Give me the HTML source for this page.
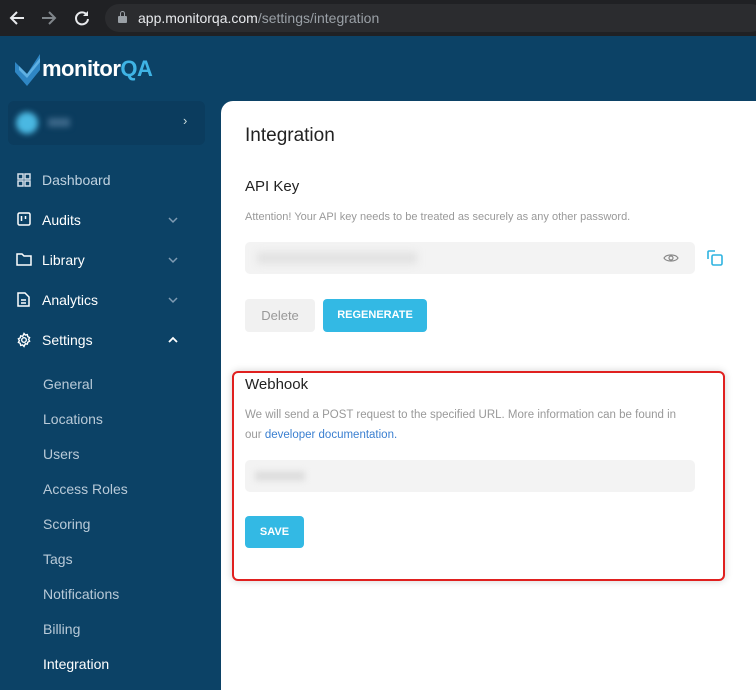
<!DOCTYPE html>
<html><head><style>
*{margin:0;padding:0;box-sizing:border-box}
body{width:756px;height:690px;overflow:hidden;background:#0c4266;font-family:"Liberation Sans",sans-serif;position:relative}
.bar{position:absolute;left:0;top:0;width:756px;height:36px;background:#202124}
.url{position:absolute;left:105px;top:4px;width:660px;height:28px;border-radius:14px;background:#2b2c2f;color:#9aa0a6;font-size:14px;line-height:28px;padding-left:33px}
.url b{color:#e8eaed;font-weight:normal}
.abs{position:absolute}
.nav{position:absolute;left:42px;color:#fff;font-size:14px}
.sub{position:absolute;left:43px;color:#b9cad8;font-size:14px}
.main{position:absolute;left:221px;top:101px;width:535px;height:589px;background:#fff;border-top-left-radius:12px}
.t{position:absolute;color:#222}
</style></head><body>
<div class="bar">
<svg class="abs" style="left:8px;top:9px" width="18" height="18" viewBox="0 0 18 18"><path d="M16 9H3M9 3L3 9l6 6" stroke="#e8eaed" stroke-width="2" fill="none"/></svg>
<svg class="abs" style="left:40px;top:9px" width="18" height="18" viewBox="0 0 18 18"><path d="M2 9h13M9 3l6 6-6 6" stroke="#80868b" stroke-width="2" fill="none"/></svg>
<svg class="abs" style="left:73px;top:9px" width="18" height="18" viewBox="0 0 18 18"><path d="M14 6A6 6 0 1 0 15 10" stroke="#e8eaed" stroke-width="2" fill="none"/><path d="M15 2v5h-5z" fill="#e8eaed"/></svg>
<div class="url"><span class="abs" style="left:13px;top:12px;width:9px;height:7px;background:#9aa0a6;border-radius:1px"></span><span class="abs" style="left:15px;top:7px;width:5px;height:6px;border:1.5px solid #9aa0a6;border-bottom:none;border-radius:3px 3px 0 0"></span><b>app.monitorqa.com</b>/settings/integration</div>
</div>
<svg class="abs" style="left:15px;top:52px" width="26" height="34" viewBox="0 0 26 34"><path d="M0 10l12 12L25 2v16L12 34 0 20z" fill="#2f86c4"/><path d="M4 14l8 8L25 6v4L12 26 4 18z" fill="#5fb0e3"/></svg>
<div class="abs" style="left:42px;top:56px;font-size:22px;font-weight:bold;color:#fff;letter-spacing:-0.5px">monitor<span style="color:#3fb4e5">QA</span></div>
<div class="abs" style="left:8px;top:101px;width:197px;height:44px;background:#0b3c5e;border-radius:6px"></div>
<div class="abs" style="left:16px;top:112px;width:22px;height:22px;border-radius:50%;background:#4ab8e2;filter:blur(3px)"></div>
<div class="abs" style="left:48px;top:118px;width:22px;height:9px;background:#3a6688;filter:blur(3px)"></div>
<div class="abs" style="left:183px;top:113px;color:#cdd;font-size:13px">›</div>
<svg class="abs" style="left:17px;top:173px" width="14" height="14" viewBox="0 0 14 14" fill="none" stroke="#d5e0ea" stroke-width="1.5"><rect x="1" y="1" width="5" height="5"/><rect x="8" y="1" width="5" height="5"/><rect x="1" y="8" width="5" height="5"/><rect x="8" y="8" width="5" height="5"/></svg>
<div class="nav" style="top:172px;color:#c0d2e0">Dashboard</div>
<svg class="abs" style="left:17px;top:212px" width="14" height="14" viewBox="0 0 14 14" fill="none" stroke="#fff" stroke-width="1.5"><rect x="1" y="1" width="12" height="12" rx="1.5"/><path d="M4.5 4v5M8.5 4v3"/></svg>
<div class="nav" style="top:212px">Audits</div>
<svg class="abs" style="left:16px;top:252px" width="16" height="14" viewBox="0 0 16 14" fill="none" stroke="#fff" stroke-width="1.5"><path d="M1 2h5l2 2h7v9H1z"/></svg>
<div class="nav" style="top:252px">Library</div>
<svg class="abs" style="left:17px;top:292px" width="13" height="15" viewBox="0 0 13 15" fill="none" stroke="#fff" stroke-width="1.5"><path d="M1 1h7l4 4v9H1z M4 8h5M4 11h5"/></svg>
<div class="nav" style="top:292px">Analytics</div>
<svg class="abs" style="left:16px;top:332px" width="16" height="16" viewBox="0 0 16 16" fill="none" stroke="#fff" stroke-width="1.4"><circle cx="8" cy="8" r="2.3"/><path d="M8 1.5l1.3 1.6 2-.5.5 2 1.8 1-1 1.8 1 1.8-1.8 1-.5 2-2-.5L8 14.5l-1.3-1.6-2 .5-.5-2-1.8-1 1-1.8-1-1.8 1.8-1 .5-2 2 .5z"/></svg>
<div class="nav" style="top:332px">Settings</div>
<svg class="abs" style="left:167px;top:216px" width="12" height="8"><path d="M2 2l4 4 4-4" stroke="#7f9bb3" stroke-width="1.5" fill="none"/></svg>
<svg class="abs" style="left:167px;top:256px" width="12" height="8"><path d="M2 2l4 4 4-4" stroke="#7f9bb3" stroke-width="1.5" fill="none"/></svg>
<svg class="abs" style="left:167px;top:296px" width="12" height="8"><path d="M2 2l4 4 4-4" stroke="#7f9bb3" stroke-width="1.5" fill="none"/></svg>
<svg class="abs" style="left:167px;top:336px" width="12" height="8"><path d="M2 6l4-4 4 4" stroke="#fff" stroke-width="1.8" fill="none"/></svg>
<div class="sub" style="top:376px">General</div>
<div class="sub" style="top:411px">Locations</div>
<div class="sub" style="top:446px">Users</div>
<div class="sub" style="top:481px">Access Roles</div>
<div class="sub" style="top:516px">Scoring</div>
<div class="sub" style="top:551px">Tags</div>
<div class="sub" style="top:586px">Notifications</div>
<div class="sub" style="top:621px">Billing</div>
<div class="sub" style="top:656px;color:#fff">Integration</div>
<div class="main">
<div class="t" style="left:24px;top:24px;font-size:19px">Integration</div>
<div class="t" style="left:24px;top:77px;font-size:15px">API Key</div>
<div class="t" style="left:24px;top:110px;font-size:11px;color:#999">Attention! Your API key needs to be treated as securely as any other password.</div>
<div class="abs" style="left:24px;top:141px;width:450px;height:32px;background:#f3f3f3;border-radius:5px"></div>
<div class="abs" style="left:36px;top:151px;width:160px;height:12px;background:#e2e2e2;filter:blur(4px)"></div>
<svg class="abs" style="left:442px;top:150px" width="16" height="14" viewBox="0 0 16 14" fill="none" stroke="#888" stroke-width="1.2"><path d="M1 7c2-4 12-4 14 0-2 4-12 4-14 0z"/><circle cx="8" cy="7" r="2"/></svg>
<svg class="abs" style="left:485px;top:148px" width="18" height="18" viewBox="0 0 18 18" fill="none" stroke="#2eb3e0" stroke-width="1.6"><path d="M2 10V3a1 1 0 0 1 1-1h6"/><rect x="6" y="6" width="10" height="10" rx="1.5"/></svg>
<div class="abs" style="left:24px;top:198px;width:70px;height:33px;background:#f1f1f1;border-radius:4px;color:#999;font-size:13px;text-align:center;line-height:33px">Delete</div>
<div class="abs" style="left:102px;top:198px;width:104px;height:33px;background:#33b9e4;border-radius:4px;color:#fff;font-size:11px;font-weight:bold;text-align:center;line-height:33px">REGENERATE</div>
<div class="abs" style="left:11px;top:270px;width:493px;height:210px;border:2px solid #e0201f;border-radius:6px;box-shadow:0 0 8px rgba(0,0,0,0.18)"></div>
<div class="t" style="left:24px;top:275px;font-size:15px">Webhook</div>
<div class="t" style="left:24px;top:305px;font-size:11.5px;color:#999;line-height:19.5px;width:470px;white-space:nowrap">We will send a POST request to the specified URL. More information can be found in<br>our <span style="color:#3a7fd0">developer documentation.</span></div>
<div class="abs" style="left:24px;top:359px;width:450px;height:32px;background:#f3f3f3;border-radius:5px"></div>
<div class="abs" style="left:34px;top:370px;width:50px;height:10px;background:#dedede;filter:blur(3px)"></div>
<div class="abs" style="left:24px;top:415px;width:59px;height:32px;background:#33b9e4;border-radius:4px;color:#fff;font-size:11px;font-weight:bold;text-align:center;line-height:32px">SAVE</div>
</div>
</body></html>
